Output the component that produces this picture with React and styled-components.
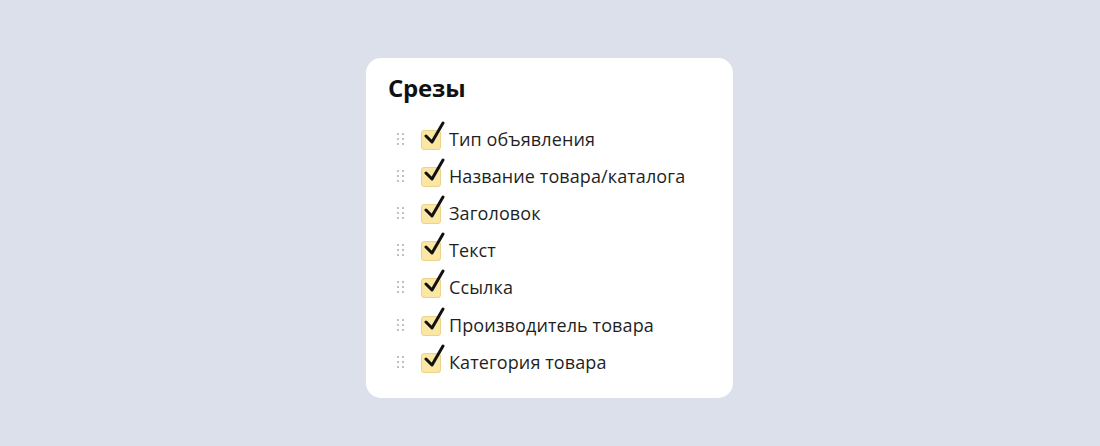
import styled, { createGlobalStyle } from 'styled-components';

const Global = createGlobalStyle`
    body {
        margin: 0;
        background: #dbe0eb;
        font-family: 'Open Sans', 'Noto Sans', sans-serif;
    }
`;

const Page = styled.div`
    width: 1100px;
    height: 446px;
    display: flex;
    justify-content: center;
    align-items: flex-start;
    padding-top: 58px;
    box-sizing: border-box;
`;

const Card = styled.div`
    width: 367px;
    height: 340px;
    margin-left: -1px;
    box-sizing: border-box;
    background: #fff;
    border-radius: 15px;
    padding: 14px 22px;
`;

const Title = styled.h2`
    margin: 0 0 16px;
    font-family: 'Open Sans', sans-serif;
    font-size: 24px;
    font-weight: 700;
    color: #111;
    line-height: 32px;
    letter-spacing: -0.2px;
`;

const List = styled.div`
    display: flex;
    flex-direction: column;
`;

const Row = styled.div`
    display: flex;
    align-items: center;
    height: 37.2px;
`;

const Handle = styled.div`
    display: grid;
    grid-template-columns: 2px 2px;
    grid-auto-rows: 2px;
    column-gap: 3px;
    row-gap: 3px;
    margin-left: 9px;
    margin-right: 17px;
    span {
        background: #a9acb3;
        border-radius: 50%;
    }
`;

const Box = styled.div`
    position: relative;
    width: 18px;
    height: 18px;
    background: #fbe6a3;
    border: 1px solid #e9d48a;
    border-radius: 3px;
    margin-right: 8px;
    margin-top: 2px;
    svg {
        position: absolute;
        left: 2px;
        top: -10px;
    }
`;

const Label = styled.span`
    font-size: 18px;
    color: #1f1f1f;
    letter-spacing: 0.1px;
`;

const items = [
    'Тип объявления',
    'Название товара/каталога',
    'Заголовок',
    'Текст',
    'Ссылка',
    'Производитель товара',
    'Категория товара',
];

function Check() {
    return (
        <svg width="22" height="24" viewBox="0 0 22 24">
            <path d="M2 15 L8 21 L19 2" fill="none" stroke="#111" strokeWidth="3" strokeLinecap="round" strokeLinejoin="round" />
        </svg>
    );
}

function App() {
    return (
        <>
            <Global />
            <Page>
                <Card>
                    <Title>Срезы</Title>
                    <List>
                        {items.map((t) => (
                            <Row key={t}>
                                <Handle>
                                    <span /><span /><span /><span /><span /><span />
                                </Handle>
                                <Box>
                                    <Check />
                                </Box>
                                <Label>{t}</Label>
                            </Row>
                        ))}
                    </List>
                </Card>
            </Page>
        </>
    );
}

export default App;
